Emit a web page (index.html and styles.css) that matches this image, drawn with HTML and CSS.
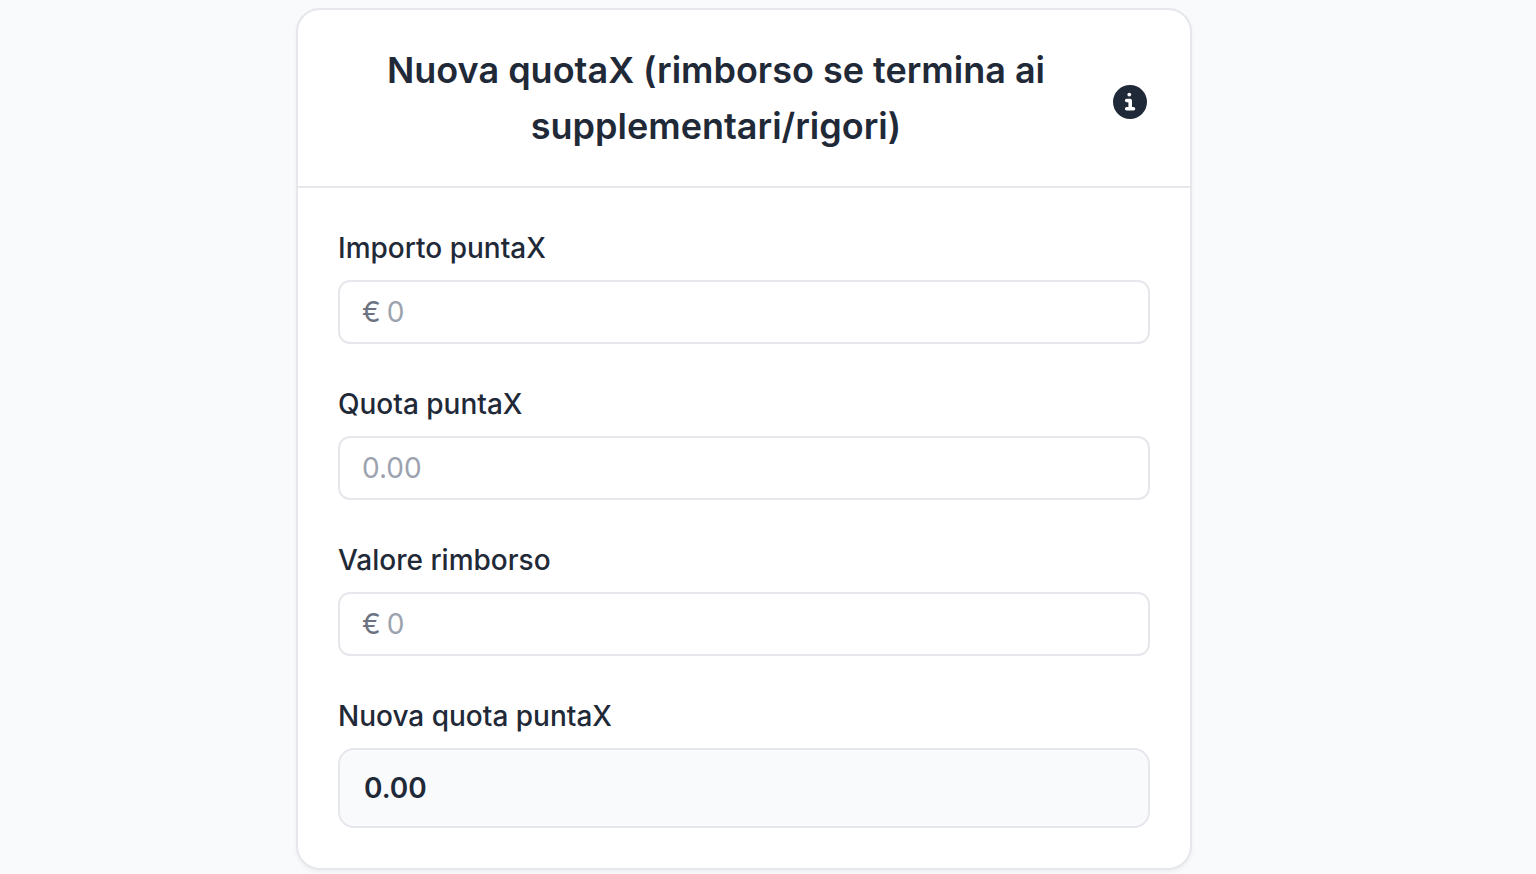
FILE: index.html
```html
<!DOCTYPE html>
<html lang="it">
<head>
  <meta charset="UTF-8" />
  <meta name="viewport" content="width=device-width, initial-scale=1" />
  <title>Nuova quotaX</title>
  <link rel="stylesheet" href="styles.css">
</head>
<body>

  <main class="page">
    <form class="card">
      <header class="card-header">
        <h1>Nuova quotaX (rimborso se termina ai supplementari/rigori)</h1>
        <button type="button" class="info-btn" aria-label="Informazioni">
          <svg viewBox="0 0 34 34" aria-hidden="true">
            <circle cx="17" cy="17" r="17" fill="#1f2937" />
            <circle cx="16.3" cy="9.6" r="1.9" fill="#fff" />
            <path d="M13.7 15.5h3.5v8.2M13.7 23.7h6.8" fill="none" stroke="#fff" stroke-width="3.6" stroke-linecap="round" stroke-linejoin="round" />
          </svg>
        </button>
      </header>

      <div class="card-body">
        <div class="field">
          <label for="importo">Importo puntaX</label>
          <div class="input-box">
            <span class="currency">€</span>
            <input type="text" id="importo" inputmode="decimal" placeholder="0" />
          </div>
        </div>

        <div class="field">
          <label for="quota">Quota puntaX</label>
          <div class="input-box">
            <input type="text" id="quota" inputmode="decimal" placeholder="0.00" />
          </div>
        </div>

        <div class="field">
          <label for="rimborso">Valore rimborso</label>
          <div class="input-box">
            <span class="currency">€</span>
            <input type="text" id="rimborso" inputmode="decimal" placeholder="0" />
          </div>
        </div>

        <div class="field">
          <label for="risultato">Nuova quota puntaX</label>
          <output class="result" id="risultato" for="importo quota rimborso">0.00</output>
        </div>
      </div>
    </form>
  </main>

</body>
</html>
```
FILE: styles.css
```css
* { margin: 0; padding: 0; box-sizing: border-box; }

body {
  font-family: Inter, "Liberation Sans", sans-serif;
  font-size: 28px;
  line-height: 40px;
  color: #1f2937;
  background: #f9fafc;
}

.page {
  padding: 8px 48px 4px 0;
}

.card {
  max-width: 896px;
  margin: 0 auto;
  background: #fff;
  border: 2px solid #e5e7eb;
  border-radius: 24px;
  box-shadow: 0 2px 4px rgba(0, 0, 0, 0.05);
}

.card-header {
  display: flex;
  align-items: center;
  gap: 16px;
  padding: 32px 40px;
  border-bottom: 2px solid #e5e7eb;
}

h1 {
  flex: 1;
  font-size: 36px;
  font-weight: 600;
  line-height: 56px;
  text-align: center;
}

.info-btn {
  display: flex;
  justify-content: center;
  width: 40px;
  padding-top: 8px;
  border: 0;
  background: transparent;
  cursor: pointer;
}

.info-btn svg {
  width: 34px;
  height: 34px;
}

.card-body {
  display: flex;
  flex-direction: column;
  gap: 40px;
  padding: 40px;
}

.field {
  display: flex;
  flex-direction: column;
  gap: 12px;
}

label {
  font-weight: 500;
}

.input-box {
  display: flex;
  align-items: center;
  gap: 6px;
  height: 64px;
  padding: 0 22px;
  border: 2px solid #e5e7eb;
  border-radius: 12px;
}

.input-box:focus-within {
  border-color: #9ca3af;
}

.currency {
  color: #6b7280;
}

input {
  flex: 1;
  min-width: 0;
  border: 0;
  outline: 0;
  background: transparent;
  font: inherit;
  color: inherit;
}

input::placeholder {
  color: #9ca3af;
}

.result {
  padding: 18px 24px;
  font-weight: 600;
  background: #f9fafc;
  border: 2px solid #e5e7eb;
  border-radius: 16px;
}
```
